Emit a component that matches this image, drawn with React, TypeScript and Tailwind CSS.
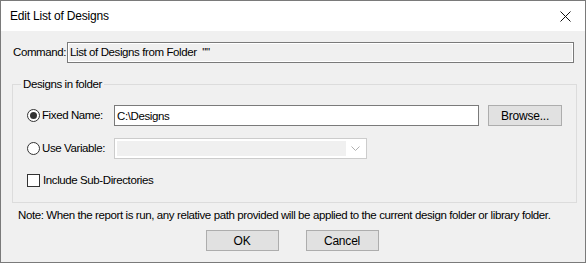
import { useState } from "react";

const font = "font-['Liberation_Sans',Arial,sans-serif]";

const Radio = ({ checked }: { checked: boolean }) => (
  <span className="w-[13px] h-[13px] rounded-full border border-[#333333] bg-white flex items-center justify-center shrink-0">
    {checked && <span className="w-[7px] h-[7px] rounded-full bg-[#333333]"></span>}
  </span>
);

const Button = ({ label, w }: { label: string; w: string }) => (
  <button className={`${w} h-[21px] bg-[#e1e1e1] border border-[#adadad] text-[12px] tracking-[-0.2px] text-black flex items-center justify-center`}>
    {label}
  </button>
);

const App = () => {
  const [mode, setMode] = useState<"fixed" | "variable">("fixed");
  const [path, setPath] = useState("C:\\Designs");
  const [subDirs, setSubDirs] = useState(false);

  return (
    <div className={`w-[586px] h-[263px] border border-[#7a7a7a] flex flex-col text-black ${font}`}>
      {/* Title bar */}
      <div className="h-[30px] bg-white flex items-center justify-between pl-[9px] pr-[10px] shrink-0">
        <span className="text-[12px] tracking-[-0.2px]">Edit List of Designs</span>
        <svg width="11" height="11" viewBox="0 0 11 11" className="mr-[4px]">
          <path d="M0.5 0.5 L10.5 10.5 M10.5 0.5 L0.5 10.5" stroke="#111" strokeWidth="1" />
        </svg>
      </div>

      {/* Body */}
      <div className="flex-1 bg-[#f0f0f0] pl-[11px] pr-[10px] flex flex-col text-[11.5px] tracking-[-0.4px]">
        {/* Command */}
        <div className="mt-[11px] flex items-center h-[21px]">
          <span className="w-[55px] pl-[1px]">Command:</span>
          <div className="flex-1 h-[21px] border border-[#7a7a7a] mr-[1px]">
            <div className="h-full border border-white bg-[#f0f0f0] flex items-center px-[1px]">
              <span className="whitespace-pre">List of Designs from Folder  ""</span>
            </div>
          </div>
        </div>

        {/* Group box */}
        <fieldset className="mt-[14px] h-[126px] border border-[#dcdcdc] px-[14px] pb-0 shrink-0">
          <legend className="px-[2px] ml-[-6px] leading-[15px]">Designs in folder</legend>
          <div className="flex items-center h-[21px] mt-[13px]">
            <button className="flex items-center gap-[2px] w-[87px]" onClick={() => setMode("fixed")}>
              <Radio checked={mode === "fixed"} />
              <span>Fixed Name:</span>
            </button>
            <input
              className="w-[365px] h-[21px] border border-[#7a7a7a] bg-white px-[2px] outline-none"
              value={path}
              onChange={(e) => setPath(e.target.value)}
            />
            <span className="ml-[9px]">
              <Button label="Browse..." w="w-[74px]" />
            </span>
          </div>
          <div className="flex items-center h-[21px] mt-[12px]">
            <button className="flex items-center gap-[2px] w-[87px]" onClick={() => setMode("variable")}>
              <Radio checked={mode === "variable"} />
              <span>Use Variable:</span>
            </button>
            <div className="w-[253px] h-[21px] border border-[#cccccc] bg-white p-[2px] flex">
              <div className="w-[229px] h-full bg-[#f0f0f0]"></div>
              <div className="flex-1 flex items-center justify-center">
                <svg width="9" height="6" viewBox="0 0 9 6">
                  <path d="M0.5 0.5 L4.5 4.5 L8.5 0.5" stroke="#b0b0b0" fill="none" strokeWidth="1" />
                </svg>
              </div>
            </div>
          </div>
          <button className="flex items-center gap-[3px] mt-[13px]" onClick={() => setSubDirs(!subDirs)}>
            <span className="w-[13px] h-[13px] border border-[#333333] bg-white flex items-center justify-center text-[10px] leading-none">
              {subDirs ? "✓" : ""}
            </span>
            <span>Include Sub-Directories</span>
          </button>
        </fieldset>

        {/* Note */}
        <div className="mt-[4px] pl-[6px] h-[17px] flex items-center whitespace-nowrap">
          Note: When the report is run, any relative path provided will be applied to the current design folder or library folder.
        </div>

        {/* Buttons */}
        <div className="mt-[6px] flex justify-center gap-[27px] pr-[3px]">
          <Button label="OK" w="w-[73px]" />
          <Button label="Cancel" w="w-[73px]" />
        </div>
      </div>
    </div>
  );
};

export default App;
